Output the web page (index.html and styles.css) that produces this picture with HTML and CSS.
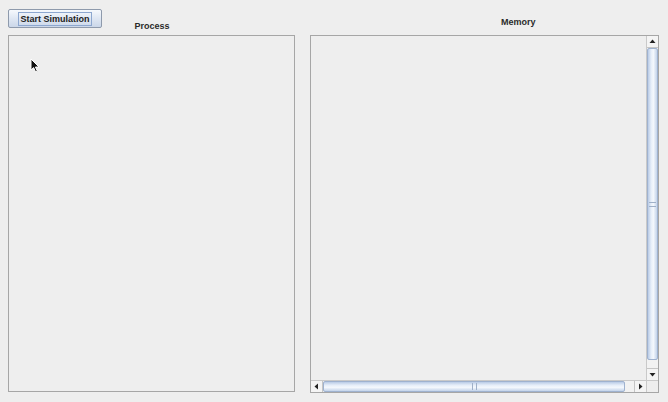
FILE: index.html
```html
<!DOCTYPE html>
<html>
<head>
<meta charset="utf-8">
<link rel="stylesheet" href="styles.css">
</head>
<body>
<div class="app">
  <div class="col col-left">
    <div class="head">
      <button class="btn"><span class="focus">Start Simulation</span></button>
      <div class="label label-process">Process</div>
    </div>
    <div class="panel panel-left"></div>
  </div>
  <div class="col col-right">
    <div class="head">
      <div class="label label-memory">Memory</div>
    </div>
    <div class="panel panel-right">
      <div class="view"></div>
      <div class="vbar">
        <div class="arrow arrow-up"><svg width="11" height="11" viewBox="0 0 11 11"><path d="M2.5 7 L8.5 7 L5.5 3.5 Z" fill="#222"/></svg></div>
        <div class="vthumb"><div class="vgrip"></div></div>
        <div class="vtrack"></div>
        <div class="arrow arrow-down"><svg width="11" height="11" viewBox="0 0 11 11"><path d="M2.5 4 L8.5 4 L5.5 7.5 Z" fill="#222"/></svg></div>
      </div>
      <div class="hbar">
        <div class="arrow arrow-left"><svg width="11" height="11" viewBox="0 0 11 11"><path d="M7 2.5 L7 8.5 L3.5 5.5 Z" fill="#222"/></svg></div>
        <div class="hthumb"><div class="hgrip"></div></div>
        <div class="htrack"></div>
        <div class="arrow arrow-right"><svg width="11" height="11" viewBox="0 0 11 11"><path d="M4 2.5 L4 8.5 L7.5 5.5 Z" fill="#222"/></svg></div>
      </div>
      <div class="corner"></div>
    </div>
  </div>
</div>
<svg class="cursor" width="12" height="16" viewBox="0 0 12 16"><path d="M1 1 L1 12 L3.6 9.6 L5.6 14 L7.4 13.2 L5.4 9 L9 9 Z" fill="#111" stroke="#fff" stroke-width="1"/></svg>
</body>
</html>
```
FILE: styles.css
```css
html, body {
  margin: 0;
  padding: 0;
  background: #eeeeee;
  width: 668px;
  height: 402px;
  overflow: hidden;
  font-family: "Liberation Sans", Arial, sans-serif;
}
body {
  position: relative;
}
.app {
  display: grid;
  grid-template-columns: 287px 349px;
  column-gap: 15px;
  padding: 9px 0 0 8px;
}
.col {
  display: flex;
  flex-direction: column;
}
.head {
  display: grid;
  height: 26px;
}
.head > * {
  grid-area: 1 / 1;
}
.btn {
  justify-self: start;
  align-self: start;
  width: 94px;
  height: 19px;
  margin: 0;
  padding: 0;
  border: 1px solid #8e9aac;
  border-radius: 2px;
  background: linear-gradient(#f6f9fd 0%, #dfe7f3 50%, #cbd7e9 100%);
  display: flex;
  align-items: center;
  justify-content: center;
  font: bold 9px "Liberation Sans", Arial, sans-serif;
  color: #222;
}
.focus {
  border: 1px solid #8da7cf;
  padding: 1px 1px;
  line-height: 10px;
}
.label {
  font: bold 9px "Liberation Sans", Arial, sans-serif;
  color: #2a2a2a;
}
.label-process {
  justify-self: center;
  align-self: end;
  margin-bottom: 4px;
  margin-left: 1px;
}
.label-memory {
  justify-self: start;
  align-self: start;
  margin-top: 8px;
  margin-left: 191px;
}
.panel {
  box-sizing: border-box;
  border: 1px solid #a6a6a6;
  background: #eeeeee;
}
.panel-left {
  height: 357px;
}
.panel-right {
  height: 358px;
  display: grid;
  grid-template-columns: 1fr 12px;
  grid-template-rows: 1fr 12px;
}
.view {
  grid-area: 1 / 1;
}
.vbar {
  grid-area: 1 / 2;
  display: flex;
  flex-direction: column;
  border-left: 1px solid #c9c9c9;
  background: #f0f0f0;
}
.hbar {
  grid-area: 2 / 1;
  display: flex;
  border-top: 1px solid #c9c9c9;
  background: #f0f0f0;
}
.corner {
  grid-area: 2 / 2;
  border-left: 1px solid #c9c9c9;
  border-top: 1px solid #c9c9c9;
  background: #eeeeee;
}
.arrow {
  flex: none;
  width: 11px;
  height: 11px;
  background: #f4f4f4;
  display: flex;
}
.arrow-up { border-bottom: 1px solid #c5c5c5; }
.arrow-down { border-top: 1px solid #c5c5c5; }
.arrow-left { border-right: 1px solid #c5c5c5; }
.arrow-right { border-left: 1px solid #c5c5c5; }
.vthumb {
  height: 312px;
  flex: none;
  box-sizing: border-box;
  border: 1px solid #9fb2cf;
  border-radius: 2px;
  background: linear-gradient(90deg, #b9cbe6 0%, #e6eef9 35%, #f4f8fd 60%, #c3d3ea 100%);
  display: flex;
  align-items: center;
  justify-content: center;
}
.vgrip {
  width: 7px;
  height: 3px;
  border-top: 1px solid #9fb0c8;
  border-bottom: 1px solid #9fb0c8;
}
.vtrack {
  flex: 1;
  background: #f2f2f2;
}
.hthumb {
  width: 302px;
  flex: none;
  box-sizing: border-box;
  border: 1px solid #9fb2cf;
  border-radius: 2px;
  background: linear-gradient(#b9cbe6 0%, #e6eef9 35%, #f4f8fd 60%, #c3d3ea 100%);
  display: flex;
  align-items: center;
  justify-content: center;
}
.hgrip {
  width: 3px;
  height: 7px;
  border-left: 1px solid #9fb0c8;
  border-right: 1px solid #9fb0c8;
}
.htrack {
  flex: 1;
  background: #f2f2f2;
}
.cursor {
  position: absolute;
  left: 30px;
  top: 58px;
}
```
